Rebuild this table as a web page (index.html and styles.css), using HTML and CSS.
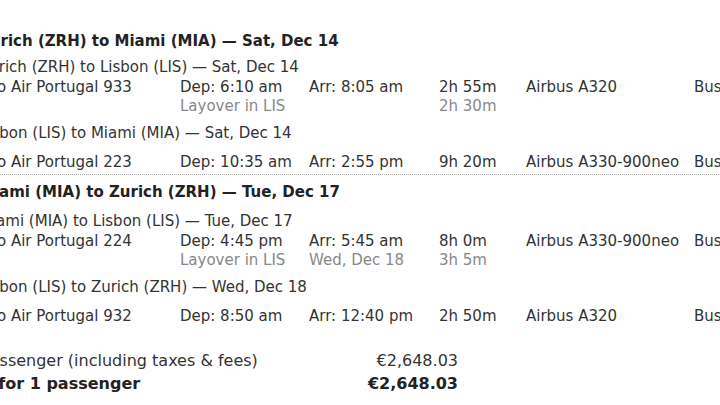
FILE: index.html
```html
<!DOCTYPE html>
<html lang="en">
<head>
<meta charset="utf-8">
<title>Itinerary</title>
<link rel="stylesheet" href="styles.css">
</head>
<body>
<div class="trip">
  <section class="leg">
    <h2 class="leg-title">Zurich (ZRH) to Miami (MIA) — Sat, Dec 14</h2>
    <div class="seg">
      <h3 class="seg-title">Zurich (ZRH) to Lisbon (LIS) — Sat, Dec 14</h3>
      <div class="row">
        <span class="flight">o Air Portugal 933</span>
        <span>Dep: 6:10 am</span>
        <span>Arr: 8:05 am</span>
        <span>2h 55m</span>
        <span>Airbus A320</span>
        <span>Business</span>
      </div>
      <div class="row muted">
        <span class="flight"></span>
        <span>Layover in LIS</span>
        <span></span>
        <span>2h 30m</span>
        <span></span>
        <span></span>
      </div>
    </div>
    <div class="seg seg-next">
      <h3 class="seg-title">Lisbon (LIS) to Miami (MIA) — Sat, Dec 14</h3>
      <div class="row">
        <span class="flight">o Air Portugal 223</span>
        <span>Dep: 10:35 am</span>
        <span>Arr: 2:55 pm</span>
        <span>9h 20m</span>
        <span>Airbus A330-900neo</span>
        <span>Business</span>
      </div>
    </div>
  </section>
  <section class="leg leg-return">
    <h2 class="leg-title">Miami (MIA) to Zurich (ZRH) — Tue, Dec 17</h2>
    <div class="seg">
      <h3 class="seg-title">Miami (MIA) to Lisbon (LIS) — Tue, Dec 17</h3>
      <div class="row">
        <span class="flight">o Air Portugal 224</span>
        <span>Dep: 4:45 pm</span>
        <span>Arr: 5:45 am</span>
        <span>8h 0m</span>
        <span>Airbus A330-900neo</span>
        <span>Business</span>
      </div>
      <div class="row muted">
        <span class="flight"></span>
        <span>Layover in LIS</span>
        <span>Wed, Dec 18</span>
        <span>3h 5m</span>
        <span></span>
        <span></span>
      </div>
    </div>
    <div class="seg seg-next">
      <h3 class="seg-title">Lisbon (LIS) to Zurich (ZRH) — Wed, Dec 18</h3>
      <div class="row">
        <span class="flight">o Air Portugal 932</span>
        <span>Dep: 8:50 am</span>
        <span>Arr: 12:40 pm</span>
        <span>2h 50m</span>
        <span>Airbus A320</span>
        <span>Business</span>
      </div>
    </div>
  </section>
  <div class="totals">
    <span class="label">Per passenger (including taxes &amp; fees)</span>
    <span class="amount">€2,648.03</span>
    <span class="label total">Total for 1 passenger</span>
    <span class="amount total">€2,648.03</span>
  </div>
</div>
</body>
</html>
```
FILE: styles.css
```css
html, body {
  margin: 0;
  padding: 0;
  background: #ffffff;
  overflow: hidden;
}
body {
  width: 720px;
  height: 405px;
  font-family: "DejaVu Sans", Verdana, sans-serif;
  font-size: 15px;
  color: #333333;
}
.trip {
  width: 900px;
  margin-left: -21px;
  padding-top: 31px;
}
.leg-title {
  margin: 0;
  font-size: 15px;
  font-weight: bold;
  line-height: 20px;
  color: #222222;
}
.seg-title {
  margin: 6px 0 0;
  font-size: 15px;
  font-weight: normal;
  line-height: 20px;
  color: #333333;
}
.seg-title + .row {
  margin-top: 1px;
}
.seg-next .seg-title {
  margin-top: 7px;
}
.seg-next .seg-title + .row {
  margin-top: 10px;
}
.row {
  display: grid;
  grid-template-columns: 201px 129px 130px 87px 168px 180px;
  line-height: 19px;
  white-space: nowrap;
}
.row .flight {
  padding-left: 18px;
}
.muted {
  color: #888888;
}
.leg-return {
  margin-top: 2px;
  border-top: 1px dotted #aaaaaa;
  padding-top: 7px;
}
.leg-return .seg:first-of-type .seg-title {
  margin-top: 9px;
}
.totals {
  display: grid;
  grid-template-columns: 388px 121px;
  margin-left: -30px;
  margin-top: 23px;
  font-size: 16px;
  line-height: 23px;
  white-space: nowrap;
}
.amount {
  text-align: right;
}
.total {
  font-weight: bold;
  color: #222222;
}
```
